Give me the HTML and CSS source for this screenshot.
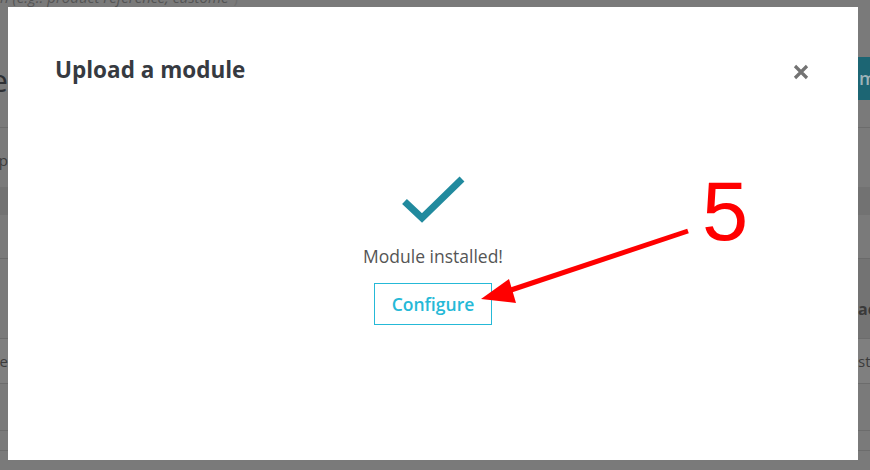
FILE: index.html
```html
<!DOCTYPE html>
<html lang="en">
<head>
<meta charset="utf-8">
<title>Upload a module</title>
<link rel="stylesheet" href="styles.css">
</head>
<body>
<div class="page">
  <div class="row row-search">
    <span class="search-text">h (e.g.: product reference, custome</span><span class="search-end">)</span>
  </div>
  <div class="row row-head">
    <div class="l"><span class="title-bg">Module manage</span></div>
    <div class="r"><span class="btn-bg">m</span></div>
  </div>
  <div class="row row-tabs">
    <div class="l"><span class="small-bg">Up</span></div>
    <div class="r"></div>
  </div>
  <div class="row row-band"></div>
  <div class="row row-a"></div>
  <div class="row row-b">
    <div class="l"></div>
    <div class="r dark"><span class="bold-bg">ac</span></div>
  </div>
  <div class="row row-c">
    <div class="l"><span class="small-bg">ie</span></div>
    <div class="r"><span class="small-bg">st</span></div>
  </div>
  <div class="row row-d"></div>
  <div class="row row-e"></div>
</div>

<div class="modal">
  <div class="modal-header">
    <h4 class="modal-title">Upload a module</h4>
    <button class="close" aria-label="Close">
      <svg width="16" height="16" viewBox="0 0 16 16"><path d="M2 2 L14 14 M14 2 L2 14" stroke="#737373" stroke-width="3.2" fill="none"/></svg>
    </button>
  </div>
  <div class="modal-body">
    <svg class="check" width="70" height="52" viewBox="0 0 70 52"><polyline points="6.5,27.5 24,44 64,5" fill="none" stroke="#218a9e" stroke-width="7" stroke-linejoin="miter"/></svg>
    <p class="msg">Module installed!</p>
    <a class="btn-configure" href="#">Configure</a>
  </div>
</div>

<svg class="annot" width="870" height="470" viewBox="0 0 870 470">
  <line x1="688" y1="231" x2="505" y2="292" stroke="#ff0000" stroke-width="5"/>
  <polygon points="481,299 509,279 516,303" fill="#ff0000"/>
</svg>
<div class="step">5</div>
</body>
</html>
```
FILE: styles.css
```css
* { box-sizing: border-box; }
html, body { margin: 0; padding: 0; }
body {
  width: 870px;
  height: 470px;
  overflow: hidden;
  background: #7a7a7a;
  font-family: "Open Sans", "Liberation Sans", sans-serif;
  position: relative;
}

/* dimmed background page */
.page { display: flex; flex-direction: column; }
.row { display: flex; justify-content: space-between; }
.row .l { width: 8px; overflow: hidden; display: flex; justify-content: flex-end; }
.row .r { width: 12px; overflow: hidden; display: flex; }
.row-search { height: 7px; overflow: hidden; justify-content: flex-start; align-items: flex-end; }
.search-text {
  font-style: italic; font-size: 15px; line-height: 15px; color: #545454;
  white-space: nowrap; margin-bottom: 2px;
}
.search-end { font-size: 15px; line-height: 15px; color: #6e6e6e; margin-left: 5px; margin-bottom: 2px; }
.row-head { height: 121px; border-bottom: 1px solid #6c6c6c; }
.row-head .l { align-items: flex-start; padding-top: 58px; }
.title-bg { font-size: 31px; line-height: 31px; color: #2e3034; white-space: nowrap; }
.row-head .r { padding-top: 50px; height: 93px; }
.btn-bg {
  display: block; width: 12px; height: 43px; background: #1c6573;
  color: #9db3b8; font-size: 18px; line-height: 43px; font-weight: 600; padding-left: 1px;
}
.row-tabs { height: 59px; }
.row-tabs .l { padding-top: 22px; }
.small-bg { font-size: 15px; line-height: 20px; color: #3b3b3b; white-space: nowrap; }
.row-band { height: 28px; background: #727272; }
.row-a { height: 44px; border-bottom: 1px solid #6a6a6a; }
.row-b { height: 79px; }
.row-b .r.dark { background: #737373; align-items: flex-end; padding-bottom: 18px; }
.bold-bg { font-size: 16px; font-weight: 700; color: #3a3a3a; white-space: nowrap; }
.row-c { height: 46px; background: #7f7f7f; border-top: 1px solid #6c6c6c; border-bottom: 1px solid #6c6c6c; align-items: center; }
.row-d { height: 47px; border-bottom: 1px solid #6c6c6c; }
.row-e { height: 20px; border-bottom: 1px solid #6c6c6c; }

/* modal */
.modal {
  position: absolute;
  left: 8px; top: 7px;
  width: 850px; height: 453px;
  background: #ffffff;
  display: flex; flex-direction: column;
}
.modal-header {
  display: flex; justify-content: space-between; align-items: flex-start;
  padding: 51px 49px 0 47px;
}
.modal-title {
  margin: 0; font-size: 22.5px; line-height: 24px; font-weight: 700; color: #363a41;
}
.close {
  border: 0; background: none; padding: 0; margin-top: 6px;
  width: 16px; height: 16px; display: block; cursor: pointer;
}
.close svg { display: block; }
.modal-body {
  display: flex; flex-direction: column; align-items: center;
  padding-top: 92px;
}
.check { display: block; }
.msg {
  margin: 18px 0 0; font-size: 17.5px; line-height: 24px; color: #555555;
}
.btn-configure {
  margin-top: 15px;
  display: flex; align-items: center; justify-content: center;
  width: 118px; height: 42px;
  border: 1px solid #25b9d7;
  color: #25b9d7; font-weight: 600; font-size: 17.5px;
  text-decoration: none;
}

/* annotation overlay */
.annot { position: absolute; left: 0; top: 0; pointer-events: none; }
.step {
  position: absolute; left: 702px; top: 167px;
  font-family: "Liberation Sans", Arial, sans-serif;
  font-size: 83px; line-height: 90px; color: #ff0000;
}
```
